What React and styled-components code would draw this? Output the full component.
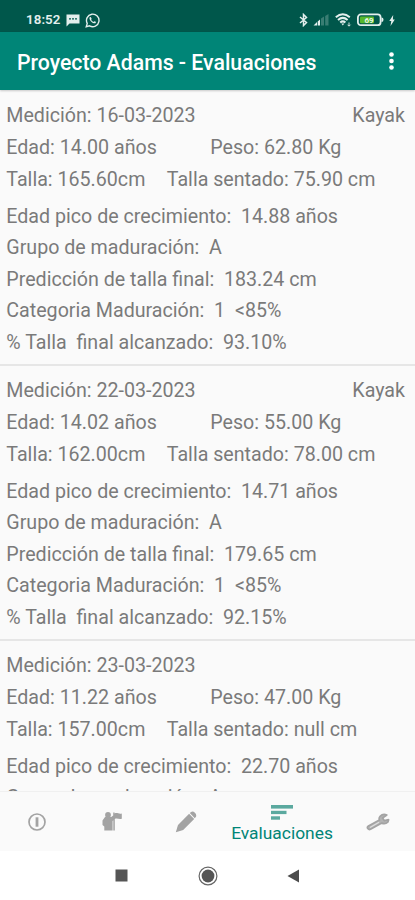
import React from 'react';
import styled, { createGlobalStyle } from 'styled-components';

const GlobalStyle = createGlobalStyle`
  * {
    box-sizing: border-box;
  }

  body {
    margin: 0;
    background: #fff;
    font-family: Roboto, sans-serif;
  }
`;

const Screen = styled.div`
  width: 415px;
  height: 900px;
  display: flex;
  flex-direction: column;
  overflow: hidden;
  background: #fafafa;
`;

const StatusBar = styled.header`
  height: 32px;
  flex-shrink: 0;
  display: flex;
  align-items: center;
  justify-content: space-between;
  padding: 8px 20px 0 26px;
  background: #00574b;
  color: #e3efed;
`;

const StatusGroup = styled.div`
  display: flex;
  align-items: center;
  gap: ${({ $gap }) => $gap}px;

  svg {
    display: block;
  }
`;

const Clock = styled.span`
  font-size: 13.3px;
  font-weight: 600;
  letter-spacing: 0.1px;
  line-height: 16px;
`;

const AppBar = styled.div`
  height: 58px;
  flex-shrink: 0;
  display: flex;
  align-items: center;
  justify-content: space-between;
  padding: 3px 21px 0 17px;
  background: #008577;
  box-shadow: 0 1px 2px rgba(0, 0, 0, 0.2);
  z-index: 1;
`;

const Title = styled.h1`
  margin: 0;
  font-size: 21.25px;
  font-weight: 500;
  line-height: 28px;
  color: #fff;
  white-space: nowrap;
`;

const MenuDots = styled.svg`
  display: block;
  margin-top: -4px;
`;

const List = styled.main`
  flex: 1;
  min-height: 0;
  padding-top: 1px;
  overflow: hidden;
`;

const Item = styled.article`
  height: 275px;
  padding: 9.4px 10px 0 6.3px;
  border-bottom: 2px solid #e6e6e6;
`;

const Group = styled.div`
  margin-bottom: 5.4px;
`;

const Row = styled.div`
  display: flex;
  justify-content: ${({ $spread }) => ($spread ? 'space-between' : 'flex-start')};
  height: 31.6px;
  line-height: 31.6px;
  font-size: 19.65px;
  color: #7a7a7a;
  white-space: pre;
`;

const Cell = styled.span`
  flex: 0 0 ${({ $width }) => ($width ? `${$width}px` : 'auto')};
`;

const BottomNav = styled.nav`
  height: 60px;
  flex-shrink: 0;
  display: flex;
  border-top: 1px solid #f0f0f0;
  background: #fafafa;
`;

const Tab = styled.div`
  width: ${({ $width }) => $width}px;
  display: flex;
  flex-direction: column;
  align-items: center;
  justify-content: center;
  padding-top: ${({ $active }) => ($active ? 6 : 0)}px;
  color: ${({ $active }) => ($active ? '#008577' : '#a3a3a3')};

  svg {
    display: block;
  }
`;

const TabLabel = styled.span`
  margin-top: 2px;
  font-size: 17.4px;
  line-height: 22px;
`;

const SystemNav = styled.footer`
  height: 49px;
  flex-shrink: 0;
  display: flex;
  align-items: center;
  padding-left: 115px;
  gap: 69.5px;
  background: #fff;

  svg {
    display: block;
  }
`;

const evaluations = [
  {
    date: '16-03-2023',
    sport: 'Kayak',
    age: '14.00',
    weight: '62.80',
    height: '165.60',
    seated: '75.90',
    peak: '14.88',
    group: 'A',
    prediction: '183.24',
    category: '1  <85%',
    reached: '93.10%',
  },
  {
    date: '22-03-2023',
    sport: 'Kayak',
    age: '14.02',
    weight: '55.00',
    height: '162.00',
    seated: '78.00',
    peak: '14.71',
    group: 'A',
    prediction: '179.65',
    category: '1  <85%',
    reached: '92.15%',
  },
  {
    date: '23-03-2023',
    sport: '',
    age: '11.22',
    weight: '47.00',
    height: '157.00',
    seated: 'null',
    peak: '22.70',
    group: 'A',
  },
];

const MessageIcon = () => (
  <svg width="14" height="13" viewBox="0 0 14 13">
    <path d="M0.5 0.5h13v9H3.5L0.5 12.5z" fill="currentColor" />
    <path d="M3 4.8h2M6 4.8h2M9 4.8h2" stroke="#00574b" strokeWidth="1.3" />
  </svg>
);

const WhatsAppIcon = () => (
  <svg width="15" height="15" viewBox="0 0 24 24" fill="none" stroke="currentColor" strokeWidth="2.2">
    <path d="M2 22l1.6-5.4A10 10 0 1 1 7.4 20.5z" />
    <path
      d="M8.2 6.5c-1 .6-1.4 2-.6 3.7 1.2 2.8 3.5 5 6.5 6.1 1.5.5 2.9 0 3.3-1.3l-.1-.9-2.5-1.1-1.3 1.3c-1.7-.7-3-2-3.8-3.5l1-1.4-1.2-2.8z"
      fill="currentColor"
      stroke="none"
    />
  </svg>
);

const BluetoothIcon = () => (
  <svg width="9" height="14" viewBox="0 0 9 14" fill="none" stroke="currentColor" strokeWidth="1.5">
    <path d="M1 4l6.5 5.500L4.500 12.500V1.500L7.500 4.500 1 10" />
  </svg>
);

const SignalIcon = () => (
  <svg width="17" height="12" viewBox="0 0 17 12">
    <path d="M0.5 11.5L4 8v3.5zM4.7 7.5L7 5.5v6H4.7z" fill="currentColor" />
    <path d="M8 4.5l3-2v9H8zM12.2 2L15.5 0v11.5h-3.3z" fill="currentColor" opacity="0.25" />
  </svg>
);

const WifiIcon = () => (
  <svg width="17" height="14" viewBox="0 0 17 14" fill="none" stroke="currentColor" strokeWidth="2">
    <path d="M0.8 4.2q7-5.8 14 0M3 6.9q4.8-4 9.6 0M5.2 9.5q2.6-2.2 5.2 0" />
    <path d="M6.3 10.4h3L7.8 12.5z" fill="currentColor" stroke="none" />
    <path d="M14 9.5v3.5M12.5 11.7L14 13.2l1.5-1.5" strokeWidth="0.9" />
  </svg>
);

const BatteryIcon = () => (
  <svg width="27" height="14" viewBox="0 0 27 14">
    <rect x="0.9" y="1.4" width="22.7" height="10.8" rx="3" fill="none" stroke="currentColor" strokeWidth="1.8" />
    <path d="M24.5 4.5q2 0 2 2.3t-2 2.3z" fill="currentColor" />
    <rect x="3" y="3.4" width="14" height="6.8" rx="1" fill="#54b82d" />
    <text x="12" y="9.7" textAnchor="middle" fontSize="8" fontWeight="700" fill="#e9f5e5">69</text>
  </svg>
);

const BoltIcon = () => (
  <svg width="6" height="11" viewBox="0 0 6 11">
    <path d="M4.2 0L0.3 6h2L1.5 11 5.8 4.5H3.9z" fill="currentColor" />
  </svg>
);

const InfoIcon = () => (
  <svg width="18" height="18" viewBox="0 0 18 18" fill="none" stroke="currentColor">
    <circle cx="9" cy="9" r="8" strokeWidth="1.7" />
    <path d="M9 4.3v9.4" strokeWidth="2.8" />
  </svg>
);

const TeamIcon = () => (
  <svg width="20" height="19" viewBox="0 0 20 19" fill="currentColor">
    <circle cx="6" cy="3" r="2.9" />
    <path d="M3 5h6.200l2-1.600V0.600h1.400v.8c2.500-1.200 4.500 1 7.200 0v5.400c-2.700 1-4.700-1-7 .2v11.500h-1.500V8.200l-.7.800v9.500H2.300v-4L0.500 13V8.500z" />
  </svg>
);

const PencilIcon = () => (
  <svg width="22" height="22" viewBox="0 0 22 22" fill="currentColor">
    <path d="M0.8 21.2L3 13.900 14.100 2.800l5.100 5.100L8.200 18.900z" />
    <path d="M14.8 2.100L16.100.9q1.900-1 3.800.8t1.100 4l-1.200 1.500z" />
  </svg>
);

const ChartIcon = () => (
  <svg width="22" height="15" viewBox="0 0 22 15" fill="#5ba99f">
    <rect width="22" height="3.6" />
    <rect y="5.8" width="15.5" height="3.3" />
    <rect y="11.3" width="9" height="3.4" />
  </svg>
);

const WrenchIcon = () => (
  <svg width="24" height="18" viewBox="0 0 24 18" stroke="currentColor" strokeLinejoin="round">
    <path
      d="M20.8 2q-4-1.500-6.700 1.300-1.500 1.700-.7 3.800L2 13.300q-1.200 1 0 2.500 1 1.200 2.500.5l11.300-6.200q3.500 1.500 6.200-1.300l.6-2.100-4.100 1-2-2.700z"
      fill="#b4b4b4"
      strokeWidth="1.7"
    />
    <path d="M4 14.500L13 9.300" fill="none" stroke="#dedede" strokeWidth="1.2" />
  </svg>
);

function EvaluationItem({ item }) {
  return (
    <Item>
      <Group>
        <Row $spread>
          <Cell>Medición: {item.date}</Cell>
          <Cell>{item.sport}</Cell>
        </Row>
        <Row>
          <Cell $width={204}>Edad: {item.age} años</Cell>
          <Cell>Peso: {item.weight} Kg</Cell>
        </Row>
        <Row>
          <Cell $width={160.5}>Talla: {item.height}cm</Cell>
          <Cell>Talla sentado: {item.seated} cm</Cell>
        </Row>
      </Group>
      <Row>{`Edad pico de crecimiento:  ${item.peak} años`}</Row>
      <Row>{`Grupo de maduración:  ${item.group}`}</Row>
      {item.prediction && (
        <>
          <Row>{`Predicción de talla final:  ${item.prediction} cm`}</Row>
          <Row>{`Categoria Maduración:  ${item.category}`}</Row>
          <Row>{`% Talla  final alcanzado:  ${item.reached}`}</Row>
        </>
      )}
    </Item>
  );
}

export default function App() {
  return (
    <>
      <GlobalStyle />
      <Screen>
        <StatusBar>
          <StatusGroup $gap={5}>
            <Clock>18:52</Clock>
            <MessageIcon />
            <WhatsAppIcon />
          </StatusGroup>
          <StatusGroup $gap={5}>
            <BluetoothIcon />
            <SignalIcon />
            <WifiIcon />
            <BatteryIcon />
            <BoltIcon />
          </StatusGroup>
        </StatusBar>

        <AppBar>
          <Title>Proyecto Adams - Evaluaciones</Title>
          <MenuDots width="5" height="18" viewBox="0 0 5 18" fill="#fff">
            <circle cx="2.5" cy="2.5" r="2.3" />
            <circle cx="2.5" cy="9" r="2.3" />
            <circle cx="2.5" cy="15.5" r="2.3" />
          </MenuDots>
        </AppBar>

        <List>
          {evaluations.map((item) => (
            <EvaluationItem key={item.date} item={item} />
          ))}
        </List>

        <BottomNav>
          <Tab $width={74}><InfoIcon /></Tab>
          <Tab $width={75}><TeamIcon /></Tab>
          <Tab $width={74}><PencilIcon /></Tab>
          <Tab $width={118} $active>
            <ChartIcon />
            <TabLabel>Evaluaciones</TabLabel>
          </Tab>
          <Tab $width={74}><WrenchIcon /></Tab>
        </BottomNav>

        <SystemNav>
          <svg width="13" height="13" viewBox="0 0 13 13">
            <rect x="0.5" y="0.5" width="12" height="12" fill="#555" />
          </svg>
          <svg width="20" height="20" viewBox="0 0 20 20">
            <circle cx="10" cy="10" r="8.9" fill="none" stroke="#666" strokeWidth="1.2" />
            <circle cx="10" cy="10" r="6.4" fill="#555" />
          </svg>
          <svg width="13" height="14" viewBox="0 0 13 14">
            <path d="M0.5 7L12 0.5v13z" fill="#4c4c4c" />
          </svg>
        </SystemNav>
      </Screen>
    </>
  );
}
